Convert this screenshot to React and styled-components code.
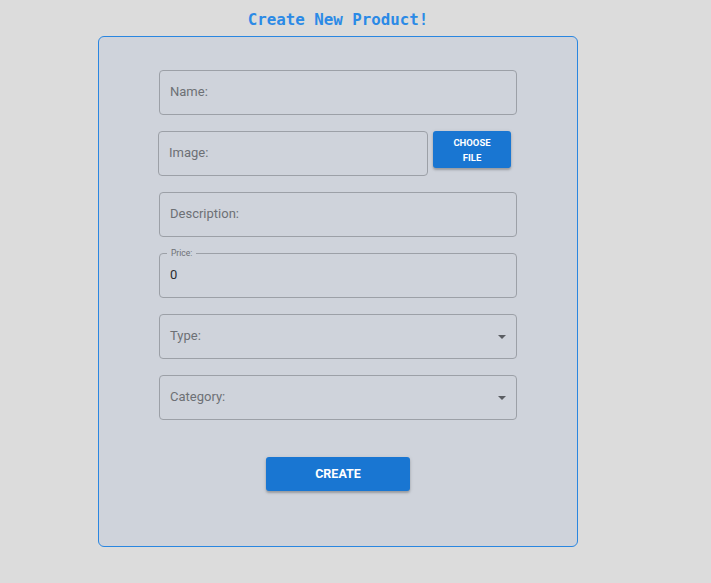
import React from "react";
import styled, { createGlobalStyle } from "styled-components";

const Global = createGlobalStyle`
  html, body { margin: 0; padding: 0; background: #dcdcdc; }
  body { font-family: Roboto, "Liberation Sans", Arial, sans-serif; }
  * { box-sizing: border-box; }
`;

const Page = styled.div`
  width: 711px;
  height: 583px;
  padding-left: 98px;
  padding-top: 9px;
`;

const Column = styled.div`
  width: 480px;
  display: flex;
  flex-direction: column;
  align-items: center;
`;

const Title = styled.h1`
  margin: 0 0 7px 0;
  height: 20px;
  line-height: 22px;
  font-family: "DejaVu Sans Mono", "Liberation Mono", monospace;
  font-weight: bold;
  font-size: 15.8px;
  color: #2b8ae6;
`;

const Card = styled.div`
  width: 480px;
  height: 511px;
  border: 1px solid #2a86e0;
  border-radius: 6px;
  background: #cfd3db;
  padding: 33px 60px 0 60px;
  display: flex;
  flex-direction: column;
  gap: 16px;
`;

const Field = styled.div`
  position: relative;
  flex-shrink: 0;
  width: ${(p) => p.$w || 358}px;
  height: 45px;
  border: 1px solid #9ca0a7;
  border-radius: 4px;
  display: flex;
  align-items: center;
  padding-left: 10px;
  padding-bottom: 2px;
  font-size: 13px;
  color: #6d7075;
`;

const Value = styled.span`
  color: #2b2d30;
  font-size: 13px;
`;

const Legend = styled.span`
  position: absolute;
  top: -6px;
  left: 7px;
  padding: 0 4px;
  background: #cfd3db;
  font-size: 8.5px;
  line-height: 10px;
  color: #6d7075;
`;

const Arrow = styled.span`
  position: absolute;
  right: 10px;
  top: 20px;
  width: 0;
  height: 0;
  border-left: 4px solid transparent;
  border-right: 4px solid transparent;
  border-top: 4px solid #5a5d62;
`;

const Row = styled.div`
  display: flex;
  gap: 5px;
  height: 45px;
  margin-left: -1px;
  align-items: flex-start;
`;

const Button = styled.button`
  flex-shrink: 0;
  width: ${(p) => p.$w}px;
  height: ${(p) => p.$h}px;
  border: none;
  border-radius: 3px;
  background: #1976d2;
  color: #fff;
  font-family: Roboto, "Liberation Sans", Arial, sans-serif;
  font-weight: 700;
  font-size: ${(p) => p.$fs}px;
  line-height: ${(p) => p.$lh || 14}px;
  text-transform: uppercase;
  box-shadow: 0 2px 2px rgba(0,0,0,0.2), 0 1px 4px rgba(0,0,0,0.12);
  padding: 0;
  cursor: pointer;
`;

const ButtonWrap = styled.div`
  display: flex;
  justify-content: center;
  margin-top: 21px;
`;

export default function App() {
  return (
    <>
      <Global />
      <Page>
        <Column>
          <Title>Create New Product!</Title>
          <Card>
            <Field>Name:</Field>
            <Row>
              <Field $w={270}>Image:</Field>
              <Button $w={78} $h={37} $fs={9.5} $lh={15}>Choose<br />File</Button>
            </Row>
            <Field>Description:</Field>
            <Field>
              <Legend>Price:</Legend>
              <Value>0</Value>
            </Field>
            <Field>Type:<Arrow /></Field>
            <Field>Category:<Arrow /></Field>
            <ButtonWrap>
              <Button $w={144} $h={34} $fs={12.5}>Create</Button>
            </ButtonWrap>
          </Card>
        </Column>
      </Page>
    </>
  );
}
